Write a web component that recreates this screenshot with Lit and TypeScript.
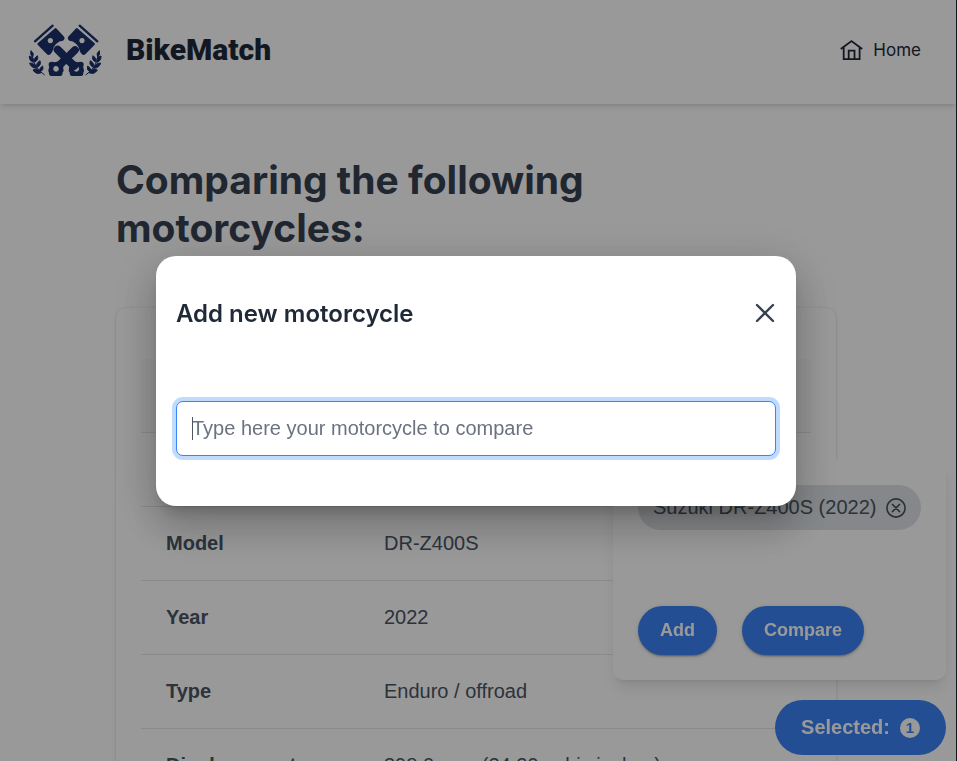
import { LitElement, html, css, svg } from "lit";
import { customElement, property } from "lit/decorators.js";

const navy = "#1b306b";

const pistonHead = svg`
  <path d="M45 80 98 33" stroke=${navy} stroke-width="7" stroke-linecap="round" fill="none"/>
  <path fill=${navy} fill-rule="evenodd" d="M53 86 105 41Q108 39 110 42L133 67Q136 73 129 78Q118 78 108 88Q101 95 99 105Q97 112 92 118Q86 124 81 119L53 90Q51 88 53 86ZM91 70a8 8 0 1 0 .1 0Z"/>`;

const laurel = svg`
  <g fill=${navy} stroke=${navy} stroke-width="3" stroke-linejoin="round">
    <path d="M33 108Q44 117 38 127Q29 119 33 108Z"/>
    <path d="M28 124Q42 127 40 143Q27 138 28 124Z"/>
    <path d="M52 123Q57 136 44 142Q39 131 52 123Z"/>
    <path d="M29 145Q47 146 50 161Q33 160 29 145Z"/>
    <path d="M60 138Q65 151 51 158Q46 147 60 138Z"/>
    <path d="M39 166Q53 159 64 174Q48 181 39 166Z"/>
    <path d="M68 154Q73 166 60 172Q55 161 68 154Z"/>
    <path d="M37 124Q42 160 74 181" fill="none"/>
  </g>`;

const bigEnd = svg`
  <path fill=${navy} fill-rule="evenodd" d="M92 142Q98 140 104 143L122 138Q131 140 131 149Q127 156 130 162Q133 170 128 173Q128 184 121 184H94Q86 183 87 174Q83 170 86 163Q89 157 86 151Q85 143 92 142ZM108 154a8.500 8.500 0 1 0 .1 0Z"/>`;

@customElement("spec-table")
class SpecTable extends LitElement {
  @property({ attribute: false }) rows: [string, string][] = [];

  static styles = css`
    :host { display: block; }
    table { width: 100%; border-collapse: collapse; table-layout: fixed; }
    .name-col { width: 218px; }
    th, td {
      height: 73px;
      padding: 0 25px;
      border-bottom: 1px solid #e5e7eb;
      text-align: left;
      color: #4b5563;
      font-size: 20px;
      font-weight: 400;
    }
    thead th { background: #f9fafb; }
    tbody th { font-weight: 700; }
  `;

  render() {
    return html`
      <table>
        <colgroup><col class="name-col" /><col /></colgroup>
        <thead><tr><th scope="col"></th><th scope="col"></th></tr></thead>
        <tbody>
          ${this.rows.map(([name, value]) => html`<tr><th scope="row">${name}</th><td>${value}</td></tr>`)}
        </tbody>
      </table>`;
  }
}

@customElement("selection-dock")
class SelectionDock extends LitElement {
  static styles = css`
    :host { display: flex; flex-direction: column; align-items: flex-end; gap: 20px; }
    .panel {
      box-sizing: border-box;
      width: 333px;
      padding: 25px;
      border-radius: 10px;
      background: #fff;
      box-shadow: 0 10px 15px -3px rgba(0, 0, 0, 0.1), 0 4px 6px -4px rgba(0, 0, 0, 0.1);
    }
    .chip {
      display: flex;
      align-items: center;
      justify-content: space-between;
      height: 45px;
      padding: 0 15px;
      border-radius: 23px;
      background: #dee2e6;
      color: #4b5563;
      font-size: 20px;
      white-space: nowrap;
    }
    button { font-family: inherit; border: 0; cursor: pointer; }
    .remove { display: flex; padding: 0; background: none; color: #495057; }
    .actions { display: flex; gap: 25px; margin-top: 76px; }
    .action, .selected {
      background: #3b82f6;
      color: #fff;
      font-weight: 700;
    }
    .action {
      height: 49px;
      padding: 0 22px;
      border-radius: 25px;
      font-size: 18px;
      box-shadow: 0 3px 1px -2px rgba(0, 0, 0, 0.2), 0 2px 2px rgba(0, 0, 0, 0.14), 0 1px 5px rgba(0, 0, 0, 0.12);
    }
    .selected {
      display: flex;
      align-items: center;
      gap: 10px;
      height: 55px;
      padding: 0 26px;
      border-radius: 28px;
      font-size: 20px;
    }
    .count {
      width: 20px;
      line-height: 20px;
      border-radius: 50%;
      background: #fff;
      color: #3b82f6;
      font-size: 15px;
      text-align: center;
    }
  `;

  render() {
    return html`
      <section class="panel">
        <div class="chip">
          <span>Suzuki DR-Z400S (2022)</span>
          <button class="remove" aria-label="Remove">
            <svg width="20" height="20" viewBox="0 0 20 20" fill="none" stroke="currentColor" stroke-width="1.6" stroke-linecap="round">
              <circle cx="10" cy="10" r="9.1" /><path d="M6.4 6.4l7.2 7.2M13.6 6.4l-7.2 7.2" />
            </svg>
          </button>
        </div>
        <div class="actions">
          <button class="action">Add</button>
          <button class="action">Compare</button>
        </div>
      </section>
      <button class="selected">Selected: <span class="count">1</span></button>`;
  }
}

@customElement("add-dialog")
class AddDialog extends LitElement {
  static styles = css`
    :host { display: block; }
    .dialog {
      box-sizing: border-box;
      width: 640px;
      max-width: 90vw;
      padding: 39px 20px 50px;
      border-radius: 20px;
      background: #fff;
      box-shadow: 0 11px 15px -7px rgba(0, 0, 0, 0.2), 0 24px 38px 3px rgba(0, 0, 0, 0.14),
        0 9px 46px 8px rgba(0, 0, 0, 0.12);
    }
    .head { display: flex; align-items: center; justify-content: space-between; height: 36px; }
    h2 { margin: 0; padding-top: 2px; color: #1f2937; font: 600 24px/32px Inter, sans-serif; }
    .close { display: flex; padding: 0; border: 0; background: none; color: #374151; cursor: pointer; }
    .field { position: relative; display: block; margin-top: 70px; }
    input {
      display: block;
      box-sizing: border-box;
      width: 100%;
      height: 55px;
      padding: 0 15px;
      border: 1px solid #3b82f6;
      border-radius: 7px;
      outline: 0;
      box-shadow: 0 0 0 4px #bfdbfe;
      font: 20px "Liberation Sans", Arial, sans-serif;
      color: #4b5563;
    }
    input::placeholder { color: #6b7280; opacity: 1; }
    .caret { position: absolute; left: 16px; top: 16px; width: 1px; height: 23px; background: #4b5563; }
  `;

  render() {
    return html`
      <div class="dialog" role="dialog" aria-modal="true" aria-labelledby="title">
        <div class="head">
          <h2 id="title">Add new motorcycle</h2>
          <button class="close" aria-label="Close">
            <svg width="22" height="22" viewBox="0 0 22 22" fill="none" stroke="currentColor" stroke-width="2.4" stroke-linecap="round">
              <path d="M3 3l16 16M19 3L3 19" />
            </svg>
          </button>
        </div>
        <label class="field">
          <input type="text" aria-label="Motorcycle" placeholder="Type here your motorcycle to compare" />
          <span class="caret"></span>
        </label>
      </div>`;
  }
}

@customElement("app-root")
class AppRoot extends LitElement {
  static styles = css`
    :host {
      display: block;
      box-sizing: border-box;
      height: 100vh;
      overflow: hidden;
      border-right: 1px solid #22262e;
      background: #fff;
      font-family: "Liberation Sans", Arial, sans-serif;
    }
    header {
      display: flex;
      align-items: center;
      justify-content: space-between;
      box-sizing: border-box;
      height: 104px;
      padding: 0 35px 4px 28px;
      box-shadow: 0 4px 6px -1px rgba(0, 0, 0, 0.1), 0 2px 4px -2px rgba(0, 0, 0, 0.1);
    }
    .brand {
      display: flex;
      align-items: center;
      gap: 24px;
      color: #1f2937;
      font: 900 30px/40px Roboto, sans-serif;
      text-decoration: none;
    }
    .home {
      display: flex;
      align-items: center;
      gap: 10px;
      color: #1f2937;
      font: 400 17px/24px Inter, sans-serif;
      text-decoration: none;
    }
    main { padding: 52px 120px 0 116px; }
    h1 { margin: 0; color: #374151; font: 700 39px/48px Inter, sans-serif; }
    .card {
      margin-top: 56px;
      padding: 51px 25px 25px;
      border-radius: 10px;
      background: #fff;
      box-shadow: 0 3px 5px rgba(0, 0, 0, 0.02), 0 0 2px rgba(0, 0, 0, 0.1), 0 1px 4px rgba(0, 0, 0, 0.08);
    }
    .dock { position: fixed; right: 11px; bottom: 6px; }
    .mask {
      position: fixed;
      inset: 0;
      display: flex;
      align-items: center;
      justify-content: center;
      padding-right: 5px;
      background: rgba(0, 0, 0, 0.4);
    }
  `;

  private rows: [string, string][] = [
    ["Brand", "Suzuki"],
    ["Model", "DR-Z400S"],
    ["Year", "2022"],
    ["Type", "Enduro / offroad"],
    ["Displacement", "398.0 ccm (24.29 cubic inches)"],
  ];

  render() {
    return html`
      <header>
        <a class="brand" href="#">
          <svg width="74" height="53" viewBox="24 28 222 159" aria-hidden="true">
            ${pistonHead}${laurel}${bigEnd}
            <g transform="translate(277 0) scale(-1 1)">${pistonHead}${bigEnd}</g>
            <g transform="translate(271 0) scale(-1 1)">${laurel}</g>
            <path d="M165 106 152 119M140 130 122 148" stroke=${navy} stroke-width="23" stroke-linecap="round" />
            <path d="M113 105 162 154" stroke=${navy} stroke-width="24" stroke-linecap="round" />
          </svg>
          BikeMatch
        </a>
        <a class="home" href="#">
          <svg width="24" height="24" viewBox="0 0 24 24" fill="none" stroke="currentColor" stroke-width="1.8">
            <path d="M1.800 11 12.500 3 23.200 11M4.700 9.500V21.200H20.600V9.500M9.700 21V12.600H15.500V21" />
          </svg>
          Home
        </a>
      </header>
      <main>
        <h1>Comparing the following motorcycles:</h1>
        <section class="card"><spec-table .rows=${this.rows}></spec-table></section>
      </main>
      <selection-dock class="dock"></selection-dock>
      <div class="mask"><add-dialog></add-dialog></div>`;
  }
}
